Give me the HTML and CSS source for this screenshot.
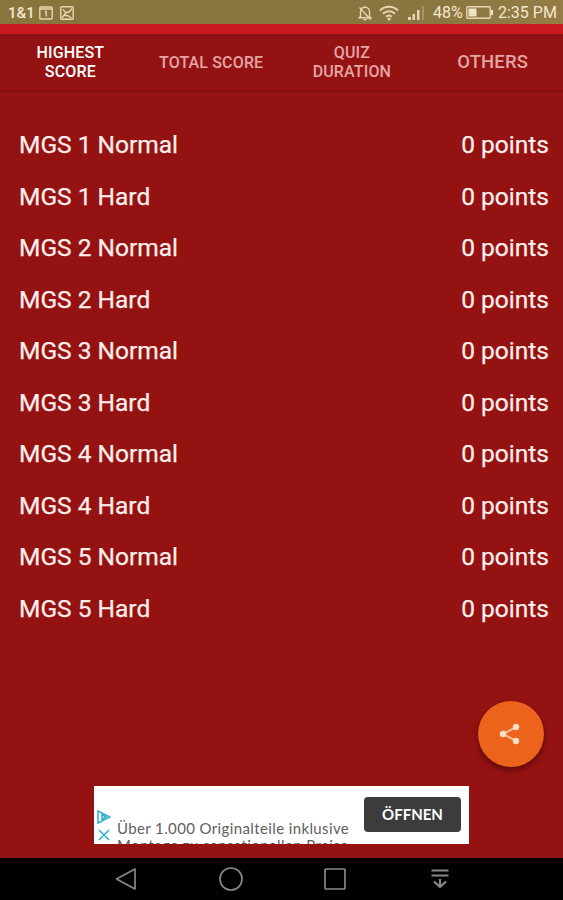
FILE: index.html
```html
<!doctype html>
<html>
<head>
  <meta charset='utf-8'>
  <meta name='viewport' content='width=device-width'>
  <title>Highest Score</title>
  <link rel="stylesheet" href="styles.css">
</head>
<body>
<div id='main'>
  <div class='status'>
    <span class='carrier'>1&amp;1</span>
    <svg class='cal' width='14' height='14' viewBox='0 0 14 14'><rect x='.8' y='1' width='12.4' height='12' rx='1'/><path d='M1 3h12M6 6l1.200-.6v5'/></svg>
    <svg class='pic' width='14' height='14' viewBox='0 0 14 14'><rect x='.8' y='.8' width='12.4' height='12.4' rx='1'/><path d='M3 3.500l3 3-4 5.500M6 6.500l3-.5 3-3.500M4.500 9.500h3l4 2.500'/></svg>
    <span class='space'></span>
    <svg class='bell' width='14' height='16' viewBox='0 0 14 16'><path d='M2.5 11.500V6.500c0-5.500 9-5.500 9 0v5l1.300 1.300H1.200zM5.200 14.600h3.600M7 2V.8M1.500 2.500l11 12'/></svg>
    <svg class='wifi' width='20' height='16' viewBox='0 0 20 16'><path d='M1 5.500c5-5 13-5 18 0M4 8.800c3.500-3.300 8.500-3.300 12 0M7 11.700c2-1.700 4-1.700 6 0'/><circle cx='10' cy='14' r='1.500'/></svg>
    <svg class='signal' width='18' height='15' viewBox='0 0 18 15'><path d='M1 12h3v3H1zM5.500 9h2.500v6H5.500zM10 5h2.500v10H10z'/><path class='dim' d='M15 1h2v14h-2z'/></svg>
    <span class='percent'>48%</span>
    <svg class='battery' width='27' height='13' viewBox='0 0 27 13'><rect x='.8' y='.8' width='23.400' height='11.400' rx='1'/><path d='M2.500 2.500h8v8h-8zM25 4h2v5h-2z'/></svg>
    <span class='time'>2:35 PM</span>
  </div>
  <div class='strip'></div>
  <div class='tabs'>
    <span class='on'>HIGHEST<br>SCORE</span>
    <span>TOTAL SCORE</span>
    <span>QUIZ<br>DURATION</span>
    <span class='big'>OTHERS</span>
  </div>
  <div class='scores'>
    <div class='row'><span>MGS 1 Normal</span><span>0 points</span></div>
    <div class='row'><span>MGS 1 Hard</span><span>0 points</span></div>
    <div class='row'><span>MGS 2 Normal</span><span>0 points</span></div>
    <div class='row'><span>MGS 2 Hard</span><span>0 points</span></div>
    <div class='row'><span>MGS 3 Normal</span><span>0 points</span></div>
    <div class='row'><span>MGS 3 Hard</span><span>0 points</span></div>
    <div class='row'><span>MGS 4 Normal</span><span>0 points</span></div>
    <div class='row'><span>MGS 4 Hard</span><span>0 points</span></div>
    <div class='row'><span>MGS 5 Normal</span><span>0 points</span></div>
    <div class='row'><span>MGS 5 Hard</span><span>0 points</span></div>
  </div>
  <div class='share'>
    <svg width='22' height='22' viewBox='0 0 22 22'><path d='M17 4L4 11l13 7'/><circle cx='17' cy='4' r='3.200'/><circle cx='4' cy='11' r='3.200'/><circle cx='17' cy='18' r='3.200'/></svg>
  </div>
  <div class='ad'>
    <div class='adicons'>
      <svg width='14' height='14' viewBox='0 0 14 14'><path d='M1 1v12l12-6zM5 4.500v5l4-2.500z'/></svg>
      <svg width='14' height='14' viewBox='0 0 14 14'><path d='M2 2l10 10M12 2L2 12'/></svg>
    </div>
    <div class='adtext'>Über 1.000 Originalteile inklusive<br>Montage zu sensationellen Preisen</div>
    <span class='open'>ÖFFNEN</span>
  </div>
  <div class='nav'>
    <span><svg width='24' height='24' viewBox='0 0 24 24'><path d='M21 2v20L2.500 12z'/></svg></span>
    <span><svg width='24' height='24' viewBox='0 0 24 24'><circle cx='12' cy='12' r='11'/></svg></span>
    <span><svg width='24' height='24' viewBox='0 0 24 24'><rect x='2' y='2' width='20' height='20' rx='1'/></svg></span>
    <span><svg width='24' height='24' viewBox='0 0 24 24'><path class='bars' d='M3.500 3.500h17M3.500 8.500h17'/><path class='arrow' d='M12 12v8M6 14.500l6 5.500 6-5.500'/></svg></span>
  </div>
</div>
</body>
</html>
```

FILE: styles.css
```css
*{margin:0;padding:0;box-sizing:border-box;}
body{background:#951212;font-family:Roboto,"Liberation Sans",sans-serif;}
svg{display:block;flex:none;fill:none;}
#main{width:563px;height:900px;overflow:hidden;display:flex;flex-direction:column;background:#951212;}
.status{height:24px;padding:1px 7px 0 8px;display:flex;align-items:center;background:linear-gradient(90deg,#89743d,#8a743f 70%,#937c45);color:#f3e6d0;font-size:16px;line-height:24px;white-space:nowrap;}
.status svg{stroke:#e6d6b3;stroke-width:1.4;}
.carrier{width:25px;font-size:15px;font-weight:500;}
.cal{margin-left:6px;}
.pic{margin-left:7px;}
.space{flex:1;}
.bell{margin-right:7px;}
.wifi{margin-right:8px;}
.status .wifi{stroke-width:2;}
.wifi circle{fill:#e6d6b3;stroke:none;}
.status .signal{fill:#e6d6b3;stroke:none;margin-right:8px;}
.signal .dim{opacity:.3;}
.percent{width:31px;}
.battery{margin:0 5px 0 2px;}
.battery path{fill:#f0e3c8;stroke:none;}
.time{width:58px;}
.strip{height:10px;background:#c91a20;}
.tabs{height:58px;display:grid;grid-template-columns:repeat(4,1fr);align-items:center;text-align:center;color:#e3a5a5;font-size:16px;font-weight:500;line-height:19px;letter-spacing:.15px;border-bottom:2px solid #830f10;background:linear-gradient(#8c1011,#951212 5px);}
.tabs .on{color:#fff;}
.tabs .big{font-size:18.5px;}
.scores{padding:27px 14px 0 19px;}
.row{height:51.55px;display:flex;justify-content:space-between;align-items:flex-start;color:#fdeeeb;font-size:24.5px;line-height:52px;-webkit-text-stroke:.25px #fdeeeb;}
.share{width:66px;height:66px;margin:67px 19px 0 auto;padding-right:2px;border-radius:50%;background:#ec641b;box-shadow:0 3px 6px rgba(0,0,0,.4);display:flex;align-items:center;justify-content:center;}
.share path{stroke:#f4bd96;stroke-width:2;}
.share circle{fill:#ffdcc5;}
.ad{width:375px;height:58px;margin:19px 0 0 94px;overflow:hidden;display:flex;align-items:flex-start;background:#fff;}
.adicons{width:23px;padding:24px 0 0 3px;}
.adicons svg{stroke:#2eafd0;stroke-width:1.5;margin-bottom:4px;}
.adtext{width:232px;padding-top:34px;overflow:hidden;white-space:nowrap;color:#606060;font:15px/17px Lato,sans-serif;letter-spacing:.38px;}
.open{width:97px;height:35px;margin:11px 0 0 15px;border-radius:4px;background:#3c3c3c;color:#fff;text-align:center;font:bold 15px/35px Lato,sans-serif;}
.nav{height:42px;margin-top:auto;padding:0 71px 0 74px;display:grid;grid-template-columns:repeat(4,1fr);align-items:center;background:#000;}
.nav svg{margin:0 auto;stroke:#888;stroke-width:1.7;stroke-linejoin:round;}
.nav .bars,.nav .arrow{stroke-width:2.2;}
```
